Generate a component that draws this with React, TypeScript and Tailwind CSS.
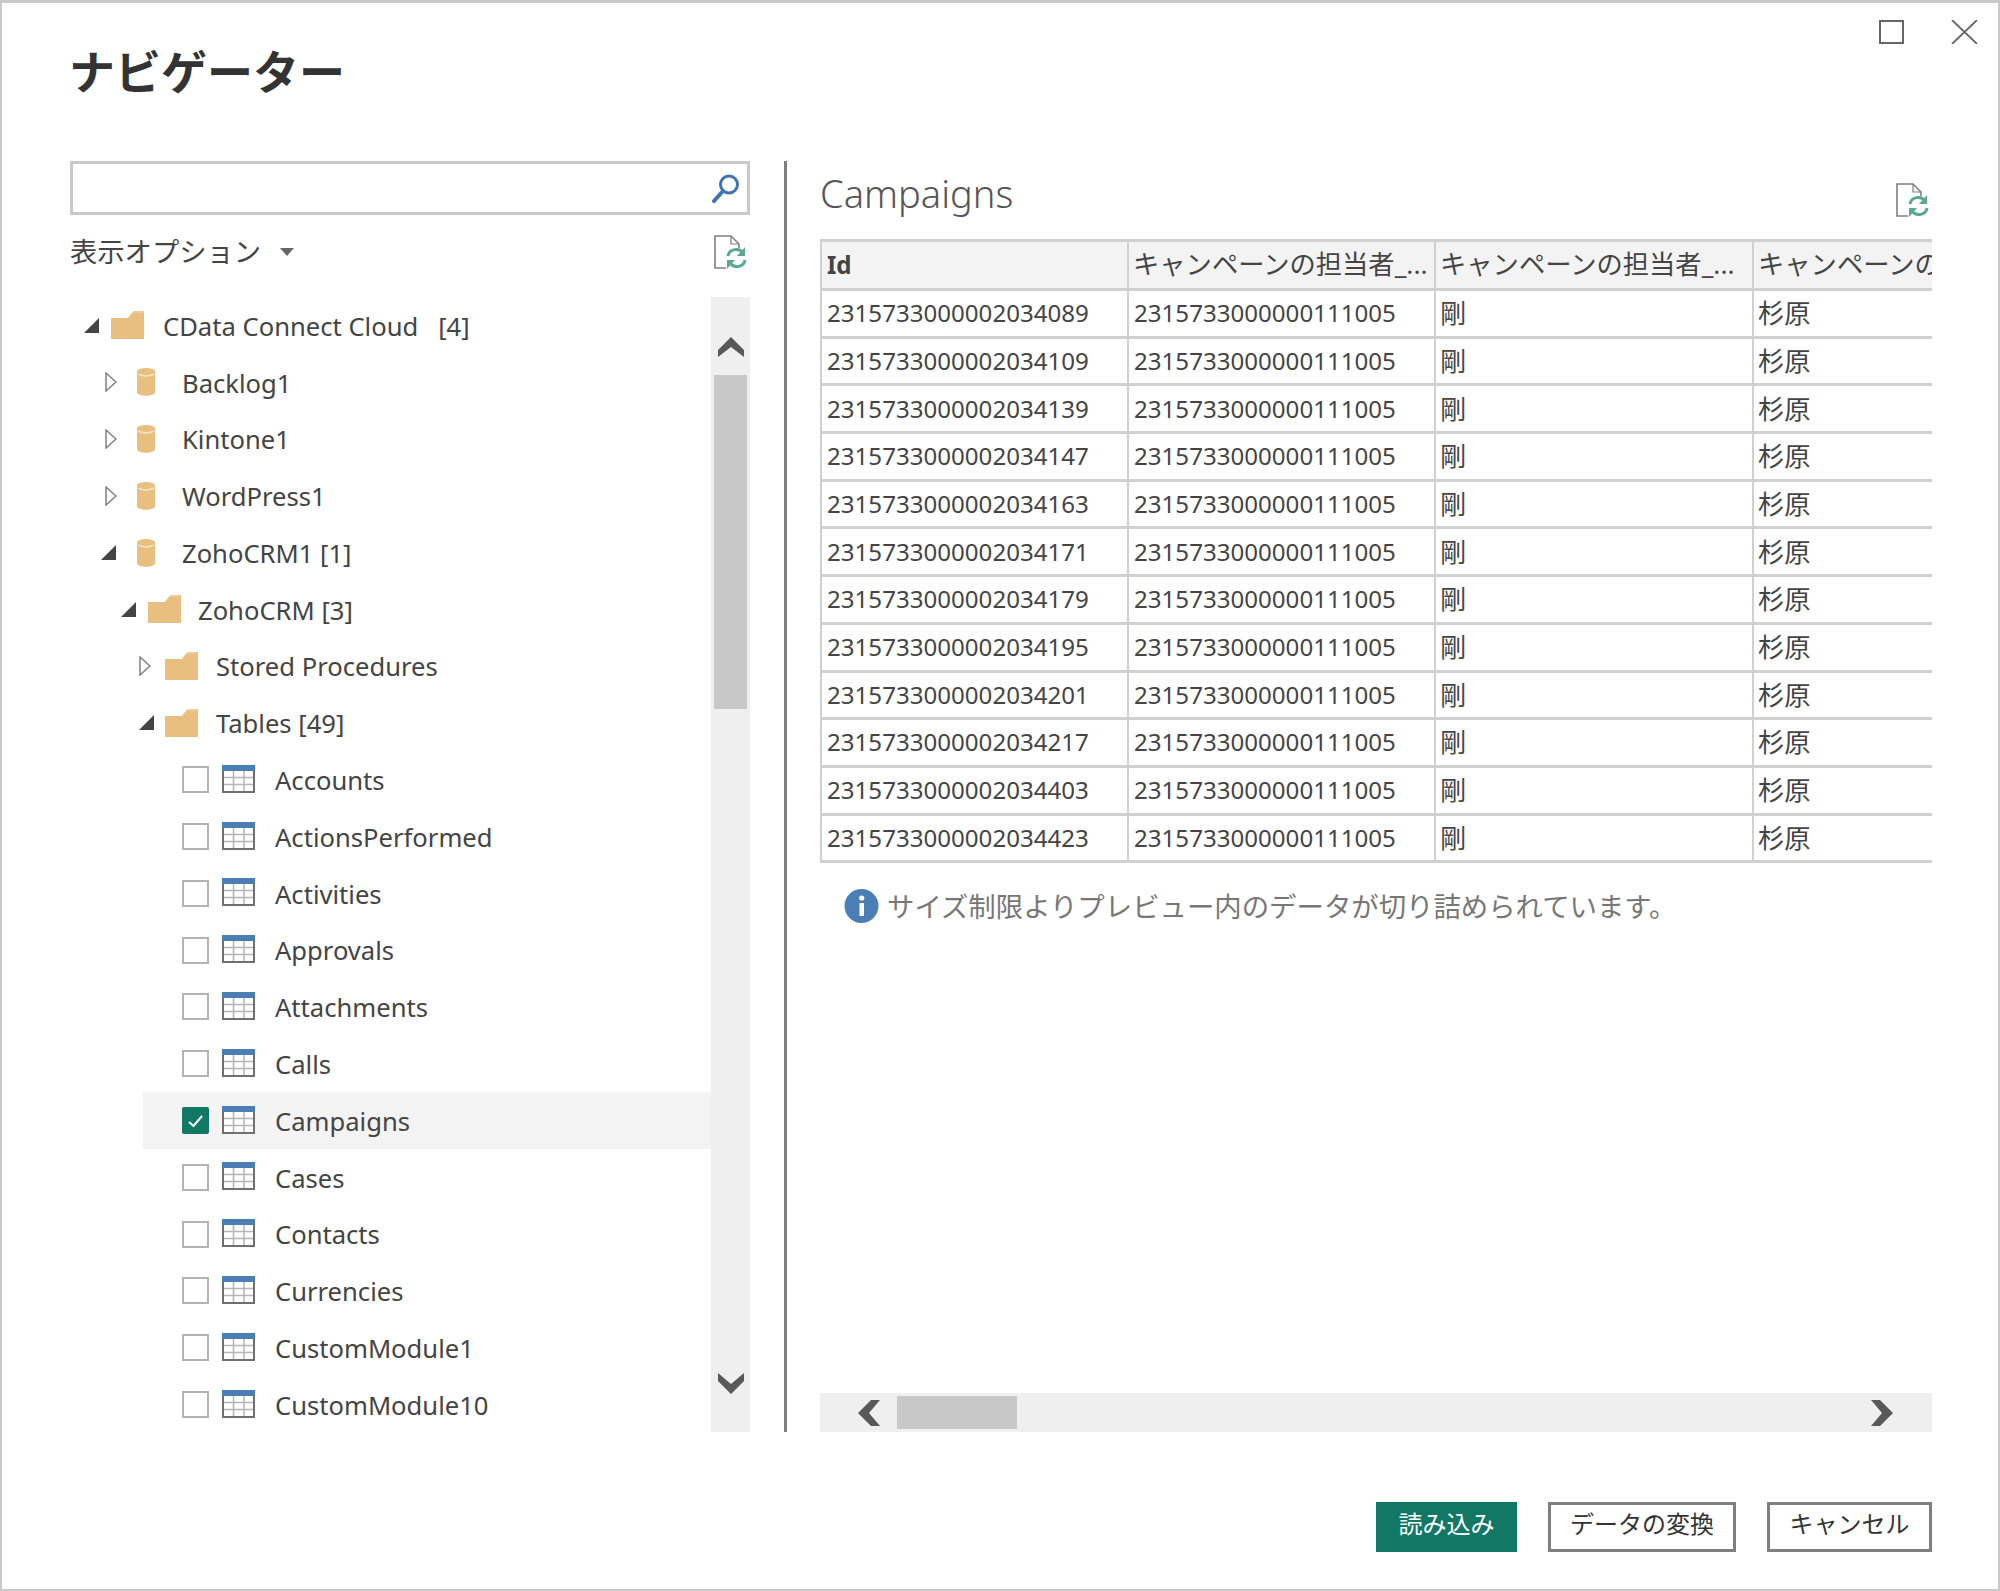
import { ReactNode } from 'react';

const ids = ['2034089', '2034109', '2034139', '2034147', '2034163', '2034171', '2034179', '2034195', '2034201', '2034217', '2034403', '2034423'];
const tables = ['Accounts', 'ActionsPerformed', 'Activities', 'Approvals', 'Attachments', 'Calls', 'Campaigns', 'Cases', 'Contacts', 'Currencies', 'CustomModule1', 'CustomModule10'];

function OpenCaret() {
  return (
    <svg width="15" height="15" viewBox="0 0 15 15">
      <path d="M15 0V15H0Z" fill="#444" />
    </svg>
  );
}

function ClosedCaret() {
  return (
    <svg width="12" height="20" viewBox="0 0 12 20">
      <path d="M1 1L11 10L1 19Z" fill="#fff" stroke="#808080" strokeWidth="1.5" />
    </svg>
  );
}

function FolderIcon() {
  return (
    <svg width="33" height="28" viewBox="0 0 33 28">
      <path d="M0 7H17L22 0.5C22.3 0 23 0 23.5 0H33V28H0Z" fill="#e8bf7e" />
      <path d="M17 6.5L22 1H32" stroke="#f3dcb5" fill="none" />
    </svg>
  );
}

function DbIcon() {
  return (
    <svg width="18" height="28" viewBox="0 0 18 28">
      <path d="M0 4C0 1 18 1 18 4V24C18 29 0 29 0 24Z" fill="#e8bf7e" />
      <ellipse cx="9" cy="3" rx="9" ry="3" fill="#e8bf7e" />
      <path d="M1 6C5 8.5 13 8.5 17 6" stroke="#f5e2c2" strokeWidth="1.5" fill="none" />
    </svg>
  );
}

function TableIcon() {
  return (
    <svg width="33" height="28" viewBox="0 0 33 28">
      <rect x="1" y="1" width="31" height="26" fill="#fff" stroke="#6f6f6f" strokeWidth="2" />
      <path d="M11.5 6V26M22 6V26M2 12.5H31M2 19.5H31" stroke="#b5b5b5" strokeWidth="1.5" />
      <rect width="33" height="6" fill="#4a7eb5" />
    </svg>
  );
}

function RefreshDocIcon() {
  return (
    <svg width="33" height="35" viewBox="0 0 33 35">
      <path d="M12 33H1V1H17L25 9V13" fill="none" stroke="#808080" strokeWidth="1.6" />
      <path d="M17 1V9H25" fill="none" stroke="#808080" strokeWidth="1.2" />
      <path d="M14 21C15 14 25 12 29 18" fill="none" stroke="#5ba88f" strokeWidth="3" />
      <path d="M31 12V21H23Z" fill="#5ba88f" />
      <path d="M31 25C30 32 20 34 16 28" fill="none" stroke="#5ba88f" strokeWidth="3" />
      <path d="M13 34V25H21Z" fill="#5ba88f" />
    </svg>
  );
}

function Chevron({ dir }: { dir: 'up' | 'down' | 'left' | 'right' }) {
  if (dir === 'up') {
    return (
      <svg width="26" height="20" viewBox="0 0 26 20" className="shrink-0">
        <path d="M13 0L26 13V20L13 10L0 20V13Z" fill="#595959" />
      </svg>
    );
  }
  if (dir === 'down') {
    return (
      <svg width="26" height="21" viewBox="0 0 26 21" className="shrink-0">
        <path d="M13 21L26 8V0L13 11L0 0V8Z" fill="#595959" />
      </svg>
    );
  }
  if (dir === 'left') {
    return (
      <svg width="22" height="26" viewBox="0 0 22 26" className="shrink-0">
        <path d="M0 13L13 0H22L11 13L22 26H13Z" fill="#595959" />
      </svg>
    );
  }
  return (
    <svg width="22" height="26" viewBox="0 0 22 26" className="shrink-0">
      <path d="M22 13L9 0H0L11 13L0 26H9Z" fill="#595959" />
    </svg>
  );
}

function Label({ children }: { children: ReactNode }) {
  return <span className="-ml-px whitespace-pre pt-[3px] text-[25.6px] text-[#444]">{children}</span>;
}

function TreeRows() {
  return (
    <>
      <div className="flex h-[56.8px] items-center pl-[14px]">
        <span className="flex w-[27px] items-center"><OpenCaret /></span>
        <span className="flex w-[53px] items-center"><FolderIcon /></span>
        <Label>CData Connect Cloud   [4]</Label>
      </div>
      {['Backlog1', 'Kintone1', 'WordPress1'].map((name) => (
        <div key={name} className="flex h-[56.8px] items-center pl-[35px]">
          <span className="flex w-[32px] items-center"><ClosedCaret /></span>
          <span className="flex w-[46px] items-center"><DbIcon /></span>
          <Label>{name}</Label>
        </div>
      ))}
      <div className="flex h-[56.8px] items-center pl-[31px]">
        <span className="flex w-[36px] items-center"><OpenCaret /></span>
        <span className="flex w-[46px] items-center"><DbIcon /></span>
        <Label>ZohoCRM1 [1]</Label>
      </div>
      <div className="flex h-[56.8px] items-center pl-[51px]">
        <span className="flex w-[27px] items-center"><OpenCaret /></span>
        <span className="flex w-[51px] items-center"><FolderIcon /></span>
        <Label>ZohoCRM [3]</Label>
      </div>
      <div className="flex h-[56.8px] items-center pl-[69px]">
        <span className="flex w-[26px] items-center"><ClosedCaret /></span>
        <span className="flex w-[52px] items-center"><FolderIcon /></span>
        <Label>Stored Procedures</Label>
      </div>
      <div className="flex h-[56.8px] items-center pl-[69px]">
        <span className="flex w-[26px] items-center"><OpenCaret /></span>
        <span className="flex w-[52px] items-center"><FolderIcon /></span>
        <Label>Tables [49]</Label>
      </div>
      {tables.map((name) => {
        const checked = name === 'Campaigns';
        return (
          <div key={name} className={`ml-[73px] flex h-[56.8px] items-center pl-[39px] ${checked ? 'bg-[#f3f3f3]' : ''}`}>
            {checked ? (
              <span className="flex h-[27px] w-[27px] items-center justify-center rounded-[2px] bg-[#117865]">
                <svg width="17" height="14" viewBox="0 0 17 14">
                  <path d="M2 8L6.5 12L15 2" fill="none" stroke="#fff" strokeWidth="2" />
                </svg>
              </span>
            ) : (
              <span className="h-[27px] w-[27px] border-[2.5px] border-[#b3b3b3] bg-white" />
            )}
            <span className="ml-[13px] mr-[21px] flex -translate-y-[1px] items-center"><TableIcon /></span>
            <Label>{name}</Label>
          </div>
        );
      })}
    </>
  );
}

function DataTable() {
  const cjk = 'text-[26.3px] leading-none';
  const head = 'overflow-hidden whitespace-nowrap pb-[2px] pl-[4px] text-left font-normal';
  return (
    <div className="overflow-hidden">
      <table className="w-[1112px] table-fixed border-collapse border-y-[3px] border-[#d0d0d0] text-[24.1px] text-[#444]">
        <thead>
          <tr className="h-[49px] border-b-[3px] border-[#d0d0d0] bg-[#f3f3f3]">
            <th className="w-[307px] border-x-2 border-[#d0d0d0] pl-[5px] text-left font-bold">Id</th>
            <th className={`w-[307px] border-r-2 border-[#d0d0d0] ${head} ${cjk}`}>キャンペーンの担当者_...</th>
            <th className={`w-[318px] border-r-2 border-[#d0d0d0] ${head} ${cjk}`}>キャンペーンの担当者_...</th>
            <th className={`w-[180px] ${head} ${cjk}`}>キャンペーンの担当者_...</th>
          </tr>
        </thead>
        <tbody>
          {ids.map((id) => (
            <tr key={id} className="h-[47.7px] border-b-[3px] border-[#d0d0d0] last:border-b-0">
              <td className="border-x-2 border-[#d0d0d0] pl-[5px]">231573300000{id.slice(0, 7)}</td>
              <td className="border-r-2 border-[#d0d0d0] pl-[5px]">2315733000000111005</td>
              <td className={`border-r-2 border-[#d0d0d0] pl-[4px] ${cjk}`}>剛</td>
              <td className={`pl-[4px] ${cjk}`}>杉原</td>
            </tr>
          ))}
        </tbody>
      </table>
    </div>
  );
}

export default function App() {
  return (
    <div className="flex h-[1591px] w-[2000px] flex-col border-2 border-t-[3px] border-[#c8c8c8] bg-white font-['Noto_Sans','Noto_Sans_CJK_JP',sans-serif]">
      <div className="flex h-[158px] justify-between pl-[67px] pr-[20px]">
        <h1 className="pt-[40px] text-[46px] font-bold leading-[56px] text-[#333]">ナビゲーター</h1>
        <div className="flex gap-[47px] pt-[17px]">
          <span className="h-[24px] w-[25px] border-2 border-[#666]" />
          <svg width="27" height="24" viewBox="0 0 27 24">
            <path d="M1 0L26 24M26 0L1 24" stroke="#666" strokeWidth="1.8" />
          </svg>
        </div>
      </div>

      <div className="flex h-[1271px]">
        <div className="ml-[68px] flex w-[680px] flex-col">
          <div className="flex h-[54px] items-center justify-end border-[3px] border-[#c8c8c8] pr-[8px]">
            <svg width="27" height="29" viewBox="0 0 27 29">
              <circle cx="17" cy="10.5" r="8.5" fill="none" stroke="#3f74b0" strokeWidth="3" />
              <path d="M11 17L2 27" stroke="#3f74b0" strokeWidth="4" strokeLinecap="round" />
            </svg>
          </div>
          <div className="flex h-[82px] items-center justify-between pb-[8px] pr-[3px]">
            <div className="flex items-center">
              <span className="text-[27.3px] leading-none text-[#444]">表示オプション</span>
              <svg width="14" height="8" viewBox="0 0 14 8" className="ml-[19px]">
                <path d="M0 0H14L7 8Z" fill="#666" />
              </svg>
            </div>
            <RefreshDocIcon />
          </div>
          <div className="flex min-h-0 flex-1">
            <div className="w-[641px]">
              <TreeRows />
            </div>
            <div className="flex w-[39px] flex-col items-center bg-[#efefef] pb-[38px] pt-[40px]">
              <Chevron dir="up" />
              <div className="mt-[18px] h-[334px] w-[33px] bg-[#c8c8c8]" />
              <div className="mt-auto">
                <Chevron dir="down" />
              </div>
            </div>
          </div>
        </div>

        <div className="ml-[34px] w-[3px] bg-[#808080]" />

        <div className="ml-[33px] flex w-[1112px] flex-col">
          <div className="flex h-[78px] items-start justify-between pr-[3px]">
            <h2 className="mt-[12px] text-[38px] font-light leading-[40px] text-[#555]">Campaigns</h2>
            <div className="mt-[22px]">
              <RefreshDocIcon />
            </div>
          </div>
          <DataTable />
          <div className="mt-[26px] flex items-center gap-[8px] pl-[24px]">
            <svg width="35" height="34" viewBox="0 0 35 34">
              <circle cx="17.5" cy="17" r="17" fill="#4a7eb5" />
              <rect x="15.5" y="14" width="4.5" height="13" fill="#fff" />
              <circle cx="17.7" cy="9" r="2.6" fill="#fff" />
            </svg>
            <span className="text-[27.4px] leading-none text-[#777]">サイズ制限よりプレビュー内のデータが切り詰められています。</span>
          </div>
          <div className="mt-auto flex h-[39px] items-center bg-[#efefef] pl-[38px] pr-[39px]">
            <Chevron dir="left" />
            <div className="ml-[17px] h-[33px] w-[120px] bg-[#c8c8c8]" />
            <div className="ml-auto">
              <Chevron dir="right" />
            </div>
          </div>
        </div>
      </div>

      <div className="flex justify-end gap-[31px] pr-[66px] pt-[70px] text-[24px]">
        <button type="button" className="h-[50px] w-[141px] bg-[#117865] pb-[6px] text-white">読み込み</button>
        <button type="button" className="h-[50px] w-[188px] border-[3px] border-[#7f7f7f] pb-[6px] text-[#333]">データの変換</button>
        <button type="button" className="h-[50px] w-[165px] border-[3px] border-[#7f7f7f] pb-[6px] text-[#333]">キャンセル</button>
      </div>
    </div>
  );
}
